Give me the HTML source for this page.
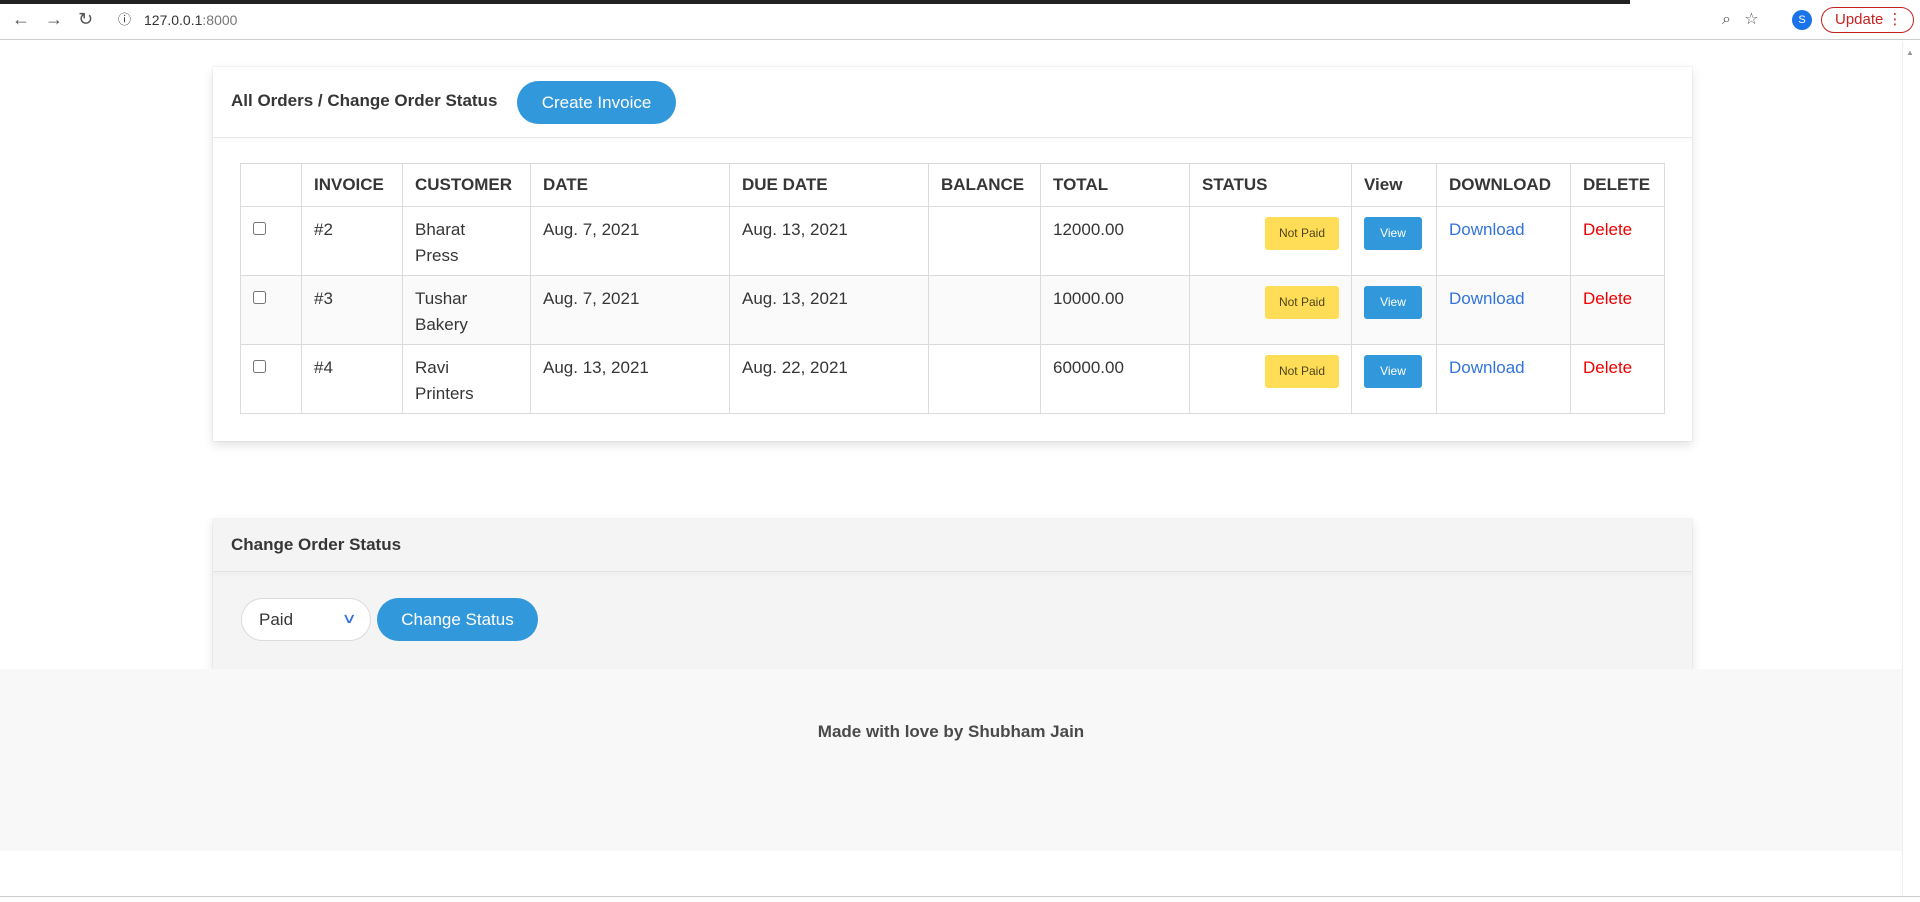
<!DOCTYPE html>
<html><head><meta charset="utf-8"><style>
*{box-sizing:border-box;margin:0;padding:0}
body{width:1920px;height:902px;overflow:hidden;background:#fff;font-family:"Liberation Sans","DejaVu Sans",sans-serif;color:#363636;position:relative}
.abs{position:absolute}
.chrome{left:0;top:0;width:1920px;height:40px;background:#fff;border-bottom:1px solid #ccc}
.topbar{left:0;top:0;width:1630px;height:4px;background:#222}
.url{left:108px;top:6px;width:1690px;height:28px;font-size:14px;color:#333;line-height:28px;padding-left:36px}
.card{background:#fff;box-shadow:0 4px 10px rgba(10,10,10,.12),0 0 0 1px rgba(10,10,10,.03)}
.btn{background:#3298dc;color:#fff;border-radius:999px;text-align:center;font-size:17px}
table{border-collapse:collapse;position:absolute;left:240px;top:163px;font-size:17px;table-layout:fixed;width:1424px}
td,th{border:1px solid #dbdbdb;vertical-align:top;text-align:left;padding:10px 12px 0;line-height:26px;overflow:hidden;white-space:normal}
th{height:43px;font-weight:bold;color:#363636;padding-top:8px}
tr.r td{height:69px}
tr.s td{background:#fafafa}
a{text-decoration:none}
.tag{display:inline-block;background:#ffdd57;color:rgba(0,0,0,.7);font-size:12px;padding:0 14px;height:33px;line-height:33px;border-radius:3px}
.vb{display:inline-block;background:#3298dc;color:#fff;font-size:12px;width:58px;height:33px;line-height:33px;text-align:center;border-radius:3px}
</style></head><body>
<div class="abs chrome"></div>
<div class="abs topbar"></div>
<div class="abs" style="left:12px;top:9px;font-size:18px;color:#555">←&nbsp;&nbsp;&nbsp;→&nbsp;&nbsp;&nbsp;↻</div>
<div class="abs url"><span style="position:absolute;left:10px;font-size:13px">ⓘ</span>127.0.0.1<span style="color:#777">:8000</span></div>
<div class="abs" style="left:1722px;top:9px;font-size:16px;color:#555">⌕&nbsp;&nbsp;&nbsp;☆</div>
<div class="abs" style="left:1792px;top:10px;width:20px;height:20px;border-radius:50%;background:#1a73e8;color:#fff;font-size:11px;text-align:center;line-height:20px">S</div>
<div class="abs" style="left:1821px;top:7px;width:93px;height:26px;border:1px solid #c5221f;border-radius:13px;color:#c5221f;font-size:15px;line-height:24px;padding-left:13px">Update ⋮</div>
<div class="abs" style="left:1902px;top:41px;width:18px;height:855px;background:#fff;border-left:1px solid #eee"></div>
<div class="abs" style="left:1906px;top:48px;font-size:8px;color:#999">▲</div>

<div class="abs card" style="left:213px;top:67px;width:1479px;height:374px"></div>
<div class="abs" style="left:213px;top:137px;width:1479px;height:1px;background:#e8e8e8;box-shadow:0 2px 3px rgba(0,0,0,.08)"></div>
<div class="abs" style="left:231px;top:91px;font-size:17px;font-weight:bold">All Orders / Change Order Status</div>
<div class="abs btn" style="left:517px;top:81px;width:159px;height:43px;line-height:43px">Create Invoice</div>

<table>
<colgroup><col style="width:61px"><col style="width:101px"><col style="width:128px"><col style="width:199px"><col style="width:199px"><col style="width:112px"><col style="width:149px"><col style="width:162px"><col style="width:85px"><col style="width:134px"><col style="width:94px"></colgroup>
<tr><th></th><th>INVOICE</th><th>CUSTOMER</th><th>DATE</th><th>DUE DATE</th><th>BALANCE</th><th>TOTAL</th><th>STATUS</th><th>View</th><th>DOWNLOAD</th><th>DELETE</th></tr>
<tr class="r"><td><input type="checkbox"></td><td>#2</td><td>Bharat<br>Press</td><td>Aug. 7, 2021</td><td>Aug. 13, 2021</td><td></td><td>12000.00</td><td style="text-align:right;padding-top:10px"><span class="tag">Not Paid</span></td><td style="padding-top:10px"><span class="vb">View</span></td><td><a style="color:#3273dc">Download</a></td><td><a style="color:#e00">Delete</a></td></tr>
<tr class="r s"><td><input type="checkbox"></td><td>#3</td><td>Tushar<br>Bakery</td><td>Aug. 7, 2021</td><td>Aug. 13, 2021</td><td></td><td>10000.00</td><td style="text-align:right;padding-top:10px"><span class="tag">Not Paid</span></td><td style="padding-top:10px"><span class="vb">View</span></td><td><a style="color:#3273dc">Download</a></td><td><a style="color:#e00">Delete</a></td></tr>
<tr class="r"><td><input type="checkbox"></td><td>#4</td><td>Ravi<br>Printers</td><td>Aug. 13, 2021</td><td>Aug. 22, 2021</td><td></td><td>60000.00</td><td style="text-align:right;padding-top:10px"><span class="tag">Not Paid</span></td><td style="padding-top:10px"><span class="vb">View</span></td><td><a style="color:#3273dc">Download</a></td><td><a style="color:#e00">Delete</a></td></tr>
</table>

<div class="abs card" style="left:213px;top:519px;width:1479px;height:150px;background:#f4f4f4"></div>
<div class="abs" style="left:213px;top:571px;width:1479px;height:1px;background:#e4e4e4;box-shadow:0 2px 3px rgba(0,0,0,.08)"></div>
<div class="abs" style="left:231px;top:535px;font-size:17px;font-weight:bold">Change Order Status</div>
<div class="abs" style="left:241px;top:598px;width:130px;height:43px;background:#fff;border:1px solid #dbdbdb;border-radius:22px;font-size:17px;line-height:41px;padding-left:17px">Paid<span style="position:absolute;right:16px;top:-1px;color:#3273dc;font-size:14px;transform:scaleX(1.5)">∨</span></div>
<div class="abs btn" style="left:377px;top:598px;width:161px;height:43px;line-height:43px">Change Status</div>

<div class="abs" style="left:0;top:669px;width:1902px;height:182px;background:#f8f8f8"></div>
<div class="abs" style="left:0;top:722px;width:1902px;text-align:center;font-size:17px;font-weight:bold;color:#4a4a4a">Made with love by Shubham Jain</div>
<div class="abs" style="left:0;top:896px;width:1920px;height:1px;background:#ccc"></div>
</body></html>
